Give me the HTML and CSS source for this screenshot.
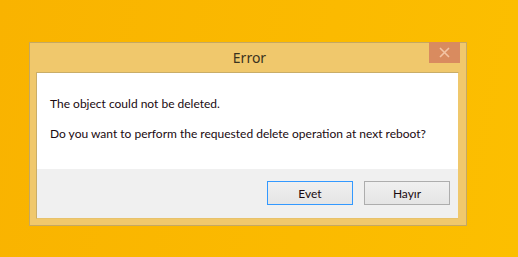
FILE: index.html
```html
<!DOCTYPE html>
<html lang="en">
<head>
  <meta charset="UTF-8">
  <meta name="viewport" content="width=device-width, initial-scale=1.0">
  <title>Error</title>
  <link rel="stylesheet" href="styles.css">
</head>
<body>
  <div class="window">
    <div class="titlebar">
      <span class="title">Error</span>
      <button class="close" aria-label="Close">
        <svg width="11" height="11" viewBox="0 0 11 11">
          <path d="M1 1 L10 10 M10 1 L1 10" stroke="#f3c4a4" stroke-width="1.6" fill="none"/>
        </svg>
      </button>
    </div>
    <div class="client">
      <div class="message">
        <p>The object could not be deleted.</p>
        <p>Do you want to perform the requested delete operation at next reboot?</p>
      </div>
      <div class="footer">
        <button class="btn default">Evet</button>
        <button class="btn">Hayır</button>
      </div>
    </div>
  </div>
</body>
</html>
```

FILE: styles.css
```css
html, body {
  margin: 0;
  height: 100%;
}
body {
  background: linear-gradient(100deg, #f9b300 0%, #fbba00 60%, #fcbf00 100%);
  font-family: Lato, 'Noto Sans', sans-serif;
  padding: 42px 0 0 29px;
  box-sizing: border-box;
  overflow: hidden;
}
.window {
  width: 438px;
  height: 184px;
  box-sizing: border-box;
  background: #f0c86c;
  border: 1px solid #c5a862;
  padding: 0 7px 6px 6px;
  display: flex;
  flex-direction: column;
}
.titlebar {
  height: 29px;
  display: flex;
  align-items: flex-start;
  justify-content: center;
  position: relative;
}
.title {
  font-family: 'Noto Sans', sans-serif;
  font-size: 14px;
  color: #3a3320;
  margin-top: 5px;
  margin-left: 4px;
}
.close {
  position: absolute;
  right: -1px;
  top: -1px;
  width: 31px;
  height: 21px;
  border: none;
  padding: 0;
  background: #d98b5f;
  display: flex;
  align-items: center;
  justify-content: center;
}
.client {
  flex: 1;
  border: 1px solid #c9ad68;
  border-right-color: #f0c86c;
  border-bottom-color: #e8c26a;
  background: #fff;
  display: flex;
  flex-direction: column;
}
.message {
  flex: 1;
  padding: 22px 0 0 13px;
  font-size: 12px;
  color: #1a0a10;
}
.message p {
  margin: 0 0 13px;
  line-height: 17px;
}
.footer {
  height: 49px;
  background: #f0f0f0;
  display: flex;
  justify-content: flex-end;
  align-items: flex-start;
  gap: 11px;
  padding: 12px 8px 0 0;
  box-sizing: border-box;
}
.btn {
  width: 86px;
  height: 24px;
  font-family: Lato, 'Noto Sans', sans-serif;
  font-size: 12px;
  color: #1a0a10;
  background: linear-gradient(#f0f0f0, #e5e5e5);
  border: 1px solid #adadad;
  padding: 0;
}
.btn.default {
  border-color: #3399ff;
}
```
